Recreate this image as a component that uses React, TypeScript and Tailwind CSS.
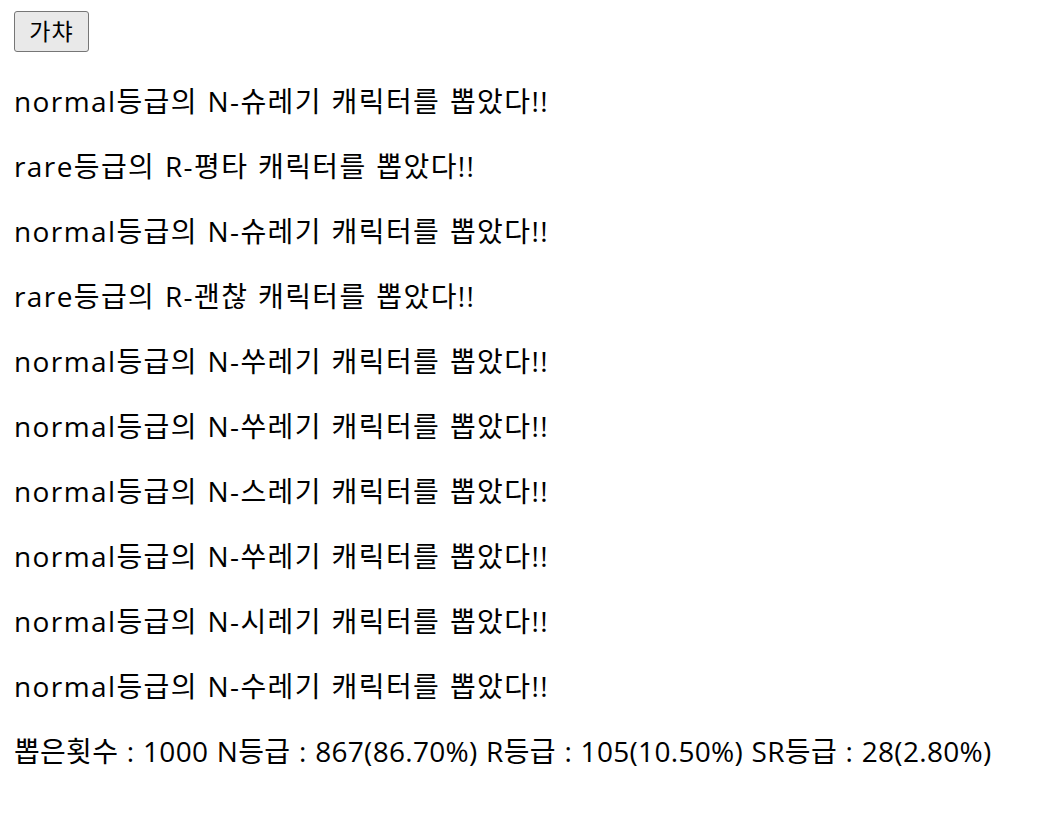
import React from "react";

const lines = [
  "normal등급의 N-슈레기 캐릭터를 뽑았다!!",
  "rare등급의 R-평타 캐릭터를 뽑았다!!",
  "normal등급의 N-슈레기 캐릭터를 뽑았다!!",
  "rare등급의 R-괜찮 캐릭터를 뽑았다!!",
  "normal등급의 N-쑤레기 캐릭터를 뽑았다!!",
  "normal등급의 N-쑤레기 캐릭터를 뽑았다!!",
  "normal등급의 N-스레기 캐릭터를 뽑았다!!",
  "normal등급의 N-쑤레기 캐릭터를 뽑았다!!",
  "normal등급의 N-시레기 캐릭터를 뽑았다!!",
  "normal등급의 N-수레기 캐릭터를 뽑았다!!",
];

export default function App() {
  return (
    <div
      className="min-h-[815px] bg-white px-[14px] pt-[11px] text-black"
      style={{ fontFamily: '"Open Sans", "Noto Sans CJK KR", sans-serif' }}
    >
      <div className="h-[44px]">
        <button className="h-[41px] w-[75px] rounded-[3px] border border-[#767676] bg-[#e9e9e9] text-[23px] leading-none tracking-[1px]">
          가챠
        </button>
      </div>
      {lines.map((l, i) => (
        <p key={i} className="my-[28px] whitespace-nowrap text-[28px] leading-[37px] tracking-[1.4px] [word-spacing:1px]">
          {l}
        </p>
      ))}
      <p className="mt-[28px] whitespace-nowrap text-[28px] leading-[37px] tracking-[0.3px] [word-spacing:1px]">
        뽑은횟수 : 1000 N등급 : 867(86.70%) R등급 : 105(10.50%) SR등급 : 28(2.80%)
      </p>
    </div>
  );
}
